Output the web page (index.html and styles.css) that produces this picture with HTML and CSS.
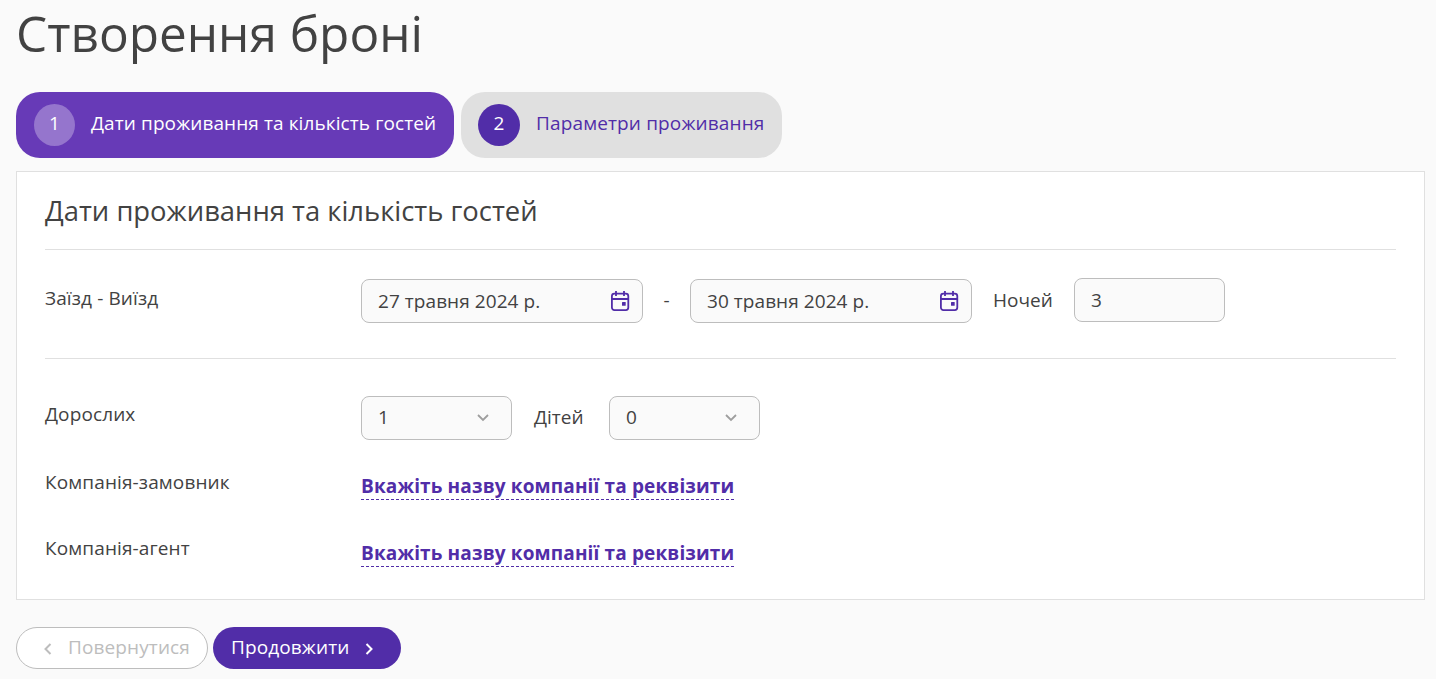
FILE: index.html
```html
<!DOCTYPE html>
<html lang="uk">
  <head>
    <meta charset="UTF-8" />
    <meta name="viewport" content="width=device-width, initial-scale=1.0" />
    <title>Створення броні</title>
    <link rel="stylesheet" href="styles.css">
  </head>
  <body>
    <h1 class="page-title">Створення броні</h1>
    <div class="steps">
      <div class="step active">
        <span class="step-number"><span class="digit">1</span></span>
        <span class="step-name">Дати проживання та кількість гостей</span>
      </div>
      <div class="step">
        <span class="step-number"><span class="digit">2</span></span>
        <span class="step-name">Параметри проживання</span>
      </div>
    </div>
    <div class="card">
      <h2 class="card-title">Дати проживання та кількість гостей</h2>
      <div class="row dates">
        <div class="label">Заїзд - Виїзд</div>
        <div class="field date">
          <span>27 травня 2024 р.</span>
          <svg class="calendar" viewBox="0 0 20 22" width="20" height="22">
            <rect x="1.9" y="3.6" width="16.4" height="16.5" rx="2.5" />
            <path d="M2 9H18M6 1V6M14 1V6" />
            <rect class="dot" x="12" y="12" width="3.7" height="3.7" rx="0.5" />
          </svg>
        </div>
        <span class="dash">-</span>
        <div class="field date">
          <span>30 травня 2024 р.</span>
          <svg class="calendar" viewBox="0 0 20 22" width="20" height="22">
            <rect x="1.9" y="3.6" width="16.4" height="16.5" rx="2.5" />
            <path d="M2 9H18M6 1V6M14 1V6" />
            <rect class="dot" x="12" y="12" width="3.7" height="3.7" rx="0.5" />
          </svg>
        </div>
        <span class="nights">Ночей</span>
        <div class="field small nights-field">3</div>
      </div>
      <div class="row guests">
        <div class="label">Дорослих</div>
        <div class="field small">
          <span>1</span>
          <svg class="arrow" viewBox="0 0 12 8" width="12" height="8"><path d="M1 1L6 6L11 1" /></svg>
        </div>
        <span class="kids">Дітей</span>
        <div class="field small">
          <span>0</span>
          <svg class="arrow" viewBox="0 0 12 8" width="12" height="8"><path d="M1 1L6 6L11 1" /></svg>
        </div>
      </div>
      <div class="row company">
        <div class="label">Компанія-замовник</div>
        <a class="link">Вкажіть назву компанії та реквізити</a>
      </div>
      <div class="row company">
        <div class="label">Компанія-агент</div>
        <a class="link">Вкажіть назву компанії та реквізити</a>
      </div>
    </div>
    <div class="buttons">
      <button class="btn back" disabled>
        <svg viewBox="0 0 8 12" width="8" height="12"><path d="M6.5 1L1.5 6L6.5 11" /></svg>
        <span>Повернутися</span>
      </button>
      <button class="btn next">
        <span>Продовжити</span>
        <svg viewBox="0 0 8 12" width="8" height="12"><path d="M1.5 1L6.5 6L1.5 11" /></svg>
      </button>
    </div>
  </body>
</html>
```
FILE: styles.css
```css
* {
  box-sizing: border-box;
}
body {
  margin: 0;
  padding: 0 11px 0 16px;
  background-color: #fafafa;
  color: #424242;
  font-family: "Open Sans", sans-serif;
  font-size: 19px;
  line-height: 26px;
}
.page-title {
  margin: 0;
  height: 92px;
  font-size: 49.5px;
  font-weight: 400;
  line-height: 67px;
}
.steps {
  display: flex;
  gap: 7px;
}
.step {
  display: flex;
  align-items: center;
  height: 66px;
  padding: 0 18px 0 17px;
  border-radius: 24px;
  background-color: #e0e0e0;
  color: #512da8;
  letter-spacing: 0.14px;
  white-space: nowrap;
}
.step.active {
  width: 438px;
  padding: 0 17px 0 18px;
  background-color: #673ab7;
  color: #fff;
  letter-spacing: 0.1px;
}
.step-number {
  display: flex;
  justify-content: center;
  align-items: center;
  width: 42px;
  height: 42px;
  margin-right: 16px;
  border-radius: 50%;
  background-color: #512da8;
  color: #fff;
}
.active .step-number {
  width: 41px;
  background-color: #9575cd;
}
.digit,
.step-name {
  padding-bottom: 4px;
}
.card {
  height: 429px;
  margin-top: 13px;
  padding: 0 28px;
  border: 1px solid #e0e0e0;
  background-color: #fff;
}
.card-title {
  height: 78px;
  margin: 0;
  border-bottom: 1px solid #e0e0e0;
  font-size: 27.4px;
  font-weight: 400;
  line-height: 77px;
}
.row {
  display: flex;
  align-items: flex-start;
}
.label {
  width: 316px;
  letter-spacing: 0.12px;
}
.dates {
  height: 109px;
  padding-top: 29px;
  border-bottom: 1px solid #e0e0e0;
}
.dates .label {
  padding-top: 6px;
}
.field {
  display: flex;
  justify-content: space-between;
  align-items: center;
  height: 44px;
  padding: 0 12px 0 16px;
  border: 1px solid #bdbdbd;
  border-radius: 8px;
  background-color: #fafafa;
}
.date {
  width: 282px;
  letter-spacing: 0.06px;
}
.small {
  width: 151px;
  padding-right: 22px;
}
.calendar {
  fill: none;
  stroke: #512da8;
  stroke-width: 1.8;
}
.dot {
  fill: #512da8;
  stroke: none;
}
.dash {
  width: 47px;
  line-height: 42px;
  text-align: center;
}
.nights {
  width: 102px;
  padding-left: 21px;
  line-height: 42px;
}
.nights-field {
  margin-top: -1px;
}
.guests {
  height: 110px;
  padding-top: 37px;
}
.guests .label {
  padding-top: 5px;
}
.guests .field span {
  padding-bottom: 2px;
}
.kids {
  width: 97px;
  padding-left: 22px;
  line-height: 42px;
}
.arrow {
  fill: none;
  stroke: #9e9e9e;
  stroke-width: 1.8;
}
.company {
  height: 67px;
}
.company + .company .label {
  margin-top: -1px;
}
.link {
  margin-top: 4px;
  border-bottom: 1px dashed #512da8;
  color: #512da8;
  font-weight: 700;
  letter-spacing: 0.14px;
}
.buttons {
  display: flex;
  gap: 5px;
  margin-top: 27px;
}
.btn {
  display: flex;
  align-items: center;
  height: 42px;
  border: 0;
  border-radius: 21px;
  font: inherit;
  letter-spacing: 0.12px;
}
.btn span {
  padding-bottom: 2px;
}
.btn svg {
  margin-top: 2px;
  fill: none;
  stroke: currentColor;
  stroke-width: 2;
}
.back {
  width: 192px;
  padding: 0 16px 0 27px;
  gap: 16px;
  border: 1px solid #bdbdbd;
  background-color: #fff;
  color: #bdbdbd;
}
.next {
  width: 188px;
  padding: 0 17px 0 18px;
  gap: 16px;
  background-color: #512da8;
  color: #fff;
  font-weight: 500;
}
```
